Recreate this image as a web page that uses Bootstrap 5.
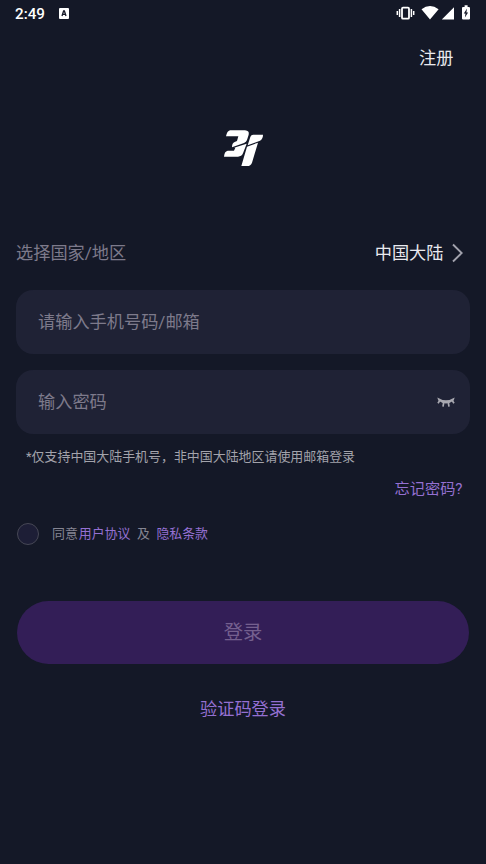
<!DOCTYPE html>
<html lang="zh-CN">
<head>
<meta charset="utf-8">
<meta name="viewport" content="width=device-width, initial-scale=1">
<title>登录</title>
<link href="https://cdn.jsdelivr.net/npm/bootstrap@5.3.0/dist/css/bootstrap.min.css" rel="stylesheet">
<style>
body{background:#141827;color:#e9e9ee;font-family:Roboto,"Noto Sans CJK SC",sans-serif;font-size:17.2px;line-height:24px;min-height:864px}
a{text-decoration:none;color:#9470d2}
.statusbar{height:27px;padding:0 15px;font-size:15.2px;font-weight:500;color:#fff}
.statusbar .notice{margin-left:14px}
.topbar{height:61px;padding-right:32.5px}
.topbar a{color:#e9e9ee}
.brand{height:121px;padding-bottom:1px}
.region{height:80.5px;padding:7px 23.5px 0 16px}
.region span:first-child{color:#7d7a8b}
.field{height:64.5px;margin:0 16px 15.5px;padding:0 14px 0 22px;background:#1f2235;border-radius:17px}
.field .form-control{font-size:17.2px;line-height:24px;color:#e9e9ee}
.field .form-control::placeholder{color:#7d7a8b;opacity:1}
.hint{font-size:12.95px;color:#a3a3ab;padding-left:26px;margin-top:-5px}
.forgot{font-size:15.2px;padding-right:23.5px;margin-top:8px}
.agree{font-size:12.92px;color:#858592;padding-left:17px;margin-top:21px}
.agree .form-check-input{width:22px;height:22px;background-color:#1d1e36;border:1px solid #464755;margin-right:13px}
.agree .and{margin:0 6.5px}
.agree a:first-of-type{margin-left:1px}
.login{height:63px;margin:55px 17px 0;padding:3px 0 0;font-size:19.3px;background:#331e57!important;color:#75608f!important;opacity:1!important}
.codelogin{margin-top:33px}
</style>
</head>
<body>
<div class="statusbar d-flex align-items-center">
  <span>2:49</span>
  <svg class="notice" width="10" height="11" viewBox="0 0 10 11"><rect width="10" height="11" rx="1" fill="#fff"/><path d="M3 8 4.6 3h.8L7 8M3.5 6.4h3" fill="none" stroke="#151827" stroke-width="1.3"/></svg>
  <svg class="ms-auto" width="76" height="18" viewBox="395 5 76 18" fill="#fff"><rect x="402" y="7.7" width="7" height="11" rx="1" fill="none" stroke="#fff" stroke-width="1.8"/><path d="M399.6 9v8M411.4 9v8M397.3 11v4M413.7 11v4" stroke="#fff" stroke-width="1.5"/><path d="M421.5 9.3Q430 2.8 438.6 9.3L430 19.5zM454 7.2v12.3h-12.2zM463 7h1.6V5.3h3V7h1.3q1.1 0 1.1 1.1v10.3q0 1.1-1.1 1.1h-5.8q-1.1 0-1.1-1.1V8.1Q462 7 463 7z"/><path d="m467 8.6-3.2 5h1.7l-.6 4 3.2-5.2h-1.7z" fill="#151827"/></svg>
</div>
<nav class="topbar d-flex align-items-center justify-content-end"><a href="#">注册</a></nav>
<div class="brand d-flex align-items-center justify-content-center">
  <svg width="66" height="56" viewBox="0 0 198 168" fill="#fff"><path d="M60 31H105Q119 32 116 44L111 60Q109 66 102 69L66 82Q66 69 74 66L81 63 85 49H48Q51 33 60 31zM72 83 110 71 99 100Q95 110 84 110H42Q43 94 53 92H72L76 83z"/><path d="M130 44H159Q159 56 150 62L113 76 120 54Q122 44 130 44zM111 80 144 68 126 128Q122 138 112 138H94z"/></svg>
</div>
<main>
<div class="region d-flex align-items-center"><span>选择国家/地区</span><span class="ms-auto">中国大陆</span>
<svg class="ms-2" width="11" height="20" viewBox="0 0 11 20"><path d="m1 1.5 8.7 8.5L1 18.5" fill="none" stroke="#a2a2ad" stroke-width="1.9"/></svg></div>
<div class="field d-flex align-items-center"><input class="form-control bg-transparent border-0 shadow-none p-0" type="text" placeholder="请输入手机号码/邮箱"></div>
<div class="field d-flex align-items-center"><input class="form-control bg-transparent border-0 shadow-none p-0" type="password" placeholder="输入密码">
<svg width="20" height="12" viewBox="0 0 20 12" class="flex-shrink-0"><path d="M1.3 1.5Q10 7 18.7 1.5L17.7 4.6Q10 10.6 2.3 4.6z" fill="#a8a8b0"/><path d="M3.8 4.5 2 7.2M7.7 6.5 7 10.7M12.3 6.5 13 10.7M16.2 4.5 18 7.2" stroke="#a8a8b0" stroke-width="1.7"/></svg></div>
<div class="hint">*仅支持中国大陆手机号，非中国大陆地区请使用邮箱登录</div>
<div class="forgot text-end"><a href="#">忘记密码?</a></div>
<div class="agree d-flex align-items-center"><input class="form-check-input mt-0 rounded-circle" type="checkbox" aria-label="同意"><span>同意</span><a href="#">用户协议</a><span class="and">及</span><a href="#">隐私条款</a></div>
<div class="d-grid"><button class="login btn rounded-pill border-0" type="button" disabled>登录</button></div>
<div class="codelogin text-center"><a href="#">验证码登录</a></div>
</main>
<script src="https://cdn.jsdelivr.net/npm/bootstrap@5.3.0/dist/js/bootstrap.bundle.min.js"></script>
</body>
</html>
